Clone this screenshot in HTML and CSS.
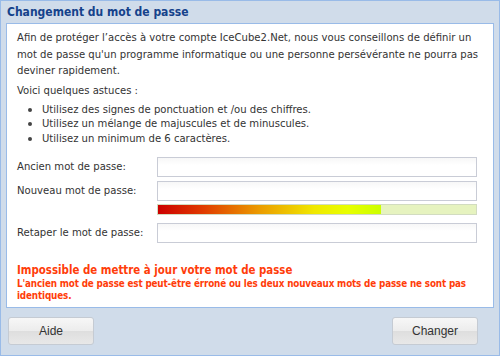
FILE: index.html
```html
<!DOCTYPE html>
<html lang="fr">
<head>
<meta charset="utf-8">
<link rel="stylesheet" href="styles.css">
</head>
<body>
<div class="window">
  <div class="title">Changement du mot de passe</div>
  <div class="panel">
    <p class="intro">Afin de protéger l’accès à votre compte IceCube2.Net, nous vous conseillons de définir un mot de passe qu'un programme informatique ou une personne persévérante ne pourra pas deviner rapidement.</p>
    <p class="tips-title">Voici quelques astuces :</p>
    <ul class="tips">
      <li>Utilisez des signes de ponctuation et /ou des chiffres.</li>
      <li>Utilisez un mélange de majuscules et de minuscules.</li>
      <li>Utilisez un minimum de 6 caractères.</li>
    </ul>
    <div class="form">
      <label class="lbl">Ancien mot de passe:</label>
      <div class="field"></div>
      <label class="lbl">Nouveau mot de passe:</label>
      <div class="field"></div>
      <span></span>
      <div class="meter"><div class="meter-fill" style="width:70%"></div></div>
      <label class="lbl lbl-gap">Retaper le mot de passe:</label>
      <div class="field field-gap"></div>
    </div>
    <div class="error">
      <div class="error-title">Impossible de mettre à jour votre mot de passe</div>
      <div class="error-text">L'ancien mot de passe est peut-être érroné ou les deux nouveaux mots de passe ne sont pas identiques.</div>
    </div>
  </div>
  <div class="buttons">
    <button class="btn">Aide</button>
    <button class="btn">Changer</button>
  </div>
</div>
</body>
</html>
```
FILE: styles.css
```css
html, body {
  margin: 0;
  padding: 0;
  width: 500px;
  height: 356px;
  overflow: hidden;
  background: #cfdbe9;
}
.window {
  box-sizing: border-box;
  width: 500px;
  height: 356px;
  border: 1px solid #99bbe8;
  background: #d0dcea;
  font-family: "DejaVu Sans Condensed", "DejaVu Sans", sans-serif;
  color: #333;
  display: flex;
  flex-direction: column;
}
.title {
  height: 22px;
  line-height: 22px;
  padding-left: 6px;
  font-weight: bold;
  font-size: 12px;
  color: #15428b;
}
.panel {
  margin: 0 5px;
  height: 285px;
  box-sizing: border-box;
  background: #fff;
  border: 1px solid #99bbe8;
  padding: 6px 10px 0 10px;
  font-size: 11.2px;
}
.intro {
  margin: 0;
  line-height: 16.5px;
}
.tips-title {
  margin: 3px 0 0;
  line-height: 16px;
}
.tips {
  margin: 4px 0 0;
  padding-left: 0;
  list-style: none;
  line-height: 14.5px;
}
.tips li {
  display: flex;
  align-items: center;
}
.tips li::before {
  content: "";
  width: 4px;
  height: 4px;
  border-radius: 50%;
  background: #444;
  margin: 0 10px 0 11px;
  flex: none;
}
.form {
  display: grid;
  grid-template-columns: 140px 320px;
  row-gap: 4px;
  margin-top: 11px;
  align-items: center;
}
.lbl {
  line-height: 20px;
}
.field {
  height: 20px;
  box-sizing: border-box;
  border: 1px solid #c9ccd6;
  background: linear-gradient(#f7f7f7, #fff 40%);
}
.meter {
  height: 11px;
  box-sizing: border-box;
  border: 1px solid #d2dcc0;
  background: #e6f3bf;
  margin-top: -1px;
}
.meter-fill {
  height: 100%;
  background: linear-gradient(90deg, #cc0000 0%, #e03a00 20%, #eb9a00 45%, #f0e800 70%, #e8ff00 85%, #ccff00 100%);
}
.lbl-gap, .field-gap {
  margin-top: 4px;
}
.error {
  margin-top: 20px;
  color: #ff3d0a;
  font-weight: bold;
}
.error-title {
  font-size: 11.4px;
  line-height: 15px;
}
.error-text {
  font-size: 9.8px;
  letter-spacing: -0.15px;
  line-height: 12px;
}
.buttons {
  display: flex;
  justify-content: space-between;
  padding: 9px 21px 0 7px;
}
.btn {
  width: 86px;
  height: 28px;
  border: 1px solid #c5cbd3;
  border-radius: 3px;
  background: linear-gradient(#f7f7f7 0%, #ececec 50%, #dedede 51%, #e8e8e8 100%);
  font-family: "Liberation Sans", Arial, sans-serif;
  font-size: 12px;
  color: #333;
  padding: 0;
}
```
